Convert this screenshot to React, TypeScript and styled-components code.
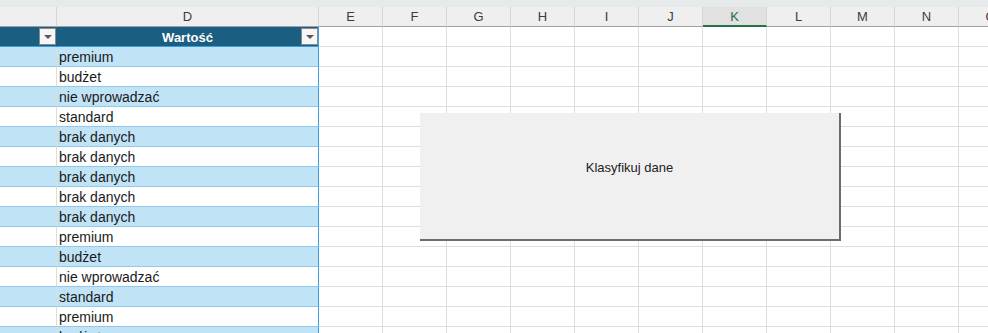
import React from 'react';
import styled, { createGlobalStyle } from 'styled-components';

const GlobalStyle = createGlobalStyle`
	html, body {
		margin: 0;
		padding: 0;
		background: #fff;
		overflow: hidden;
	}
	body {
		font-family: 'Liberation Sans', Arial, sans-serif;
	}
`;

const COLS = '57px 262px repeat(11, 64px)';

const Page = styled.div`
	position: relative;
	width: 988px;
	height: 333px;
	overflow: hidden;
`;

const TopStrip = styled.div`
	height: 7px;
	background: #e7eaea;
`;

const Row = styled.div`
	display: grid;
	grid-template-columns: ${COLS};
	height: 20px;
`;

const Letter = styled.div<{ $active?: boolean }>`
	display: flex;
	align-items: center;
	justify-content: center;
	box-sizing: border-box;
	background: ${(p) => (p.$active ? '#e1e1e1' : '#efefef')};
	border-right: 1px solid #d6d6d6;
	border-bottom: ${(p) => (p.$active ? '2px solid #217346' : '1px solid #a0a0a0')};
	color: ${(p) => (p.$active ? '#1e6e42' : '#3c3c3c')};
	font-size: 13px;
`;

const HeadCell = styled.div<{ $last?: boolean }>`
	position: relative;
	display: flex;
	align-items: center;
	justify-content: center;
	box-sizing: border-box;
	padding-top: 1px;
	background: #1a5e82;
	border-bottom: 1px solid #3a9fe0;
	border-right: ${(p) => (p.$last ? '1px solid #3a9fe0' : '1px solid #1a5e82')};
	color: #fff;
	font-weight: bold;
	font-size: 13px;
`;

const FilterButton = styled.span`
	position: absolute;
	right: 0;
	top: 1px;
	width: 17px;
	height: 17px;
	box-sizing: border-box;
	background: #f6f6f6;
	border: 1px solid #8a8a8a;
	display: flex;
	align-items: center;
	justify-content: center;

	&::after {
		content: '';
		border-left: 4px solid transparent;
		border-right: 4px solid transparent;
		border-top: 4px solid #585858;
	}
`;

const DataCell = styled.div<{ $band: boolean; $last?: boolean }>`
	box-sizing: border-box;
	background: ${(p) => (p.$band ? '#c0e4f5' : '#fff')};
	border-bottom: 1px solid #8fcaec;
	border-right: ${(p) => (p.$last ? '1px solid #3a9fe0' : '1px solid #dcdcdc')};
	color: #1a1a1a;
	font-size: 14px;
	line-height: 19px;
	padding: 1px 0 0 2px;
	white-space: nowrap;
	overflow: hidden;
`;

const GridCell = styled.div`
	box-sizing: border-box;
	border-right: 1px solid #dedede;
	border-bottom: 1px solid #dedede;
`;

const MacroButton = styled.div`
	position: absolute;
	left: 420px;
	top: 113px;
	width: 421px;
	height: 128px;
	box-sizing: border-box;
	padding-top: 47px;
	background: #f0f0f0;
	border-right: 2px solid #6c6c6c;
	border-bottom: 2px solid #6c6c6c;
	display: flex;
	align-items: flex-start;
	justify-content: center;
	color: #222;
	font-size: 13px;
	line-height: 15px;
`;

const letters = ['', 'D', 'E', 'F', 'G', 'H', 'I', 'J', 'K', 'L', 'M', 'N', 'O'];

const values = [
	'premium',
	'budżet',
	'nie wprowadzać',
	'standard',
	'brak danych',
	'brak danych',
	'brak danych',
	'brak danych',
	'brak danych',
	'premium',
	'budżet',
	'nie wprowadzać',
	'standard',
	'premium',
	'budżet',
];

const App = () => {
	return (
		<>
			<GlobalStyle />
			<Page>
				<TopStrip />
				<Row>
					{letters.map((l, i) => (
						<Letter key={i} $active={l === 'K'}>
							{l}
						</Letter>
					))}
				</Row>
				<Row>
					<HeadCell>
						<FilterButton />
					</HeadCell>
					<HeadCell $last>
						Wartość
						<FilterButton />
					</HeadCell>
					{letters.slice(2).map((l) => (
						<GridCell key={l} />
					))}
				</Row>
				{values.map((v, r) => (
					<Row key={r}>
						<DataCell $band={r % 2 === 0} />
						<DataCell $band={r % 2 === 0} $last>
							{v}
						</DataCell>
						{letters.slice(2).map((l) => (
							<GridCell key={l} />
						))}
					</Row>
				))}
				<MacroButton>Klasyfikuj dane</MacroButton>
			</Page>
		</>
	);
};

export default App;
